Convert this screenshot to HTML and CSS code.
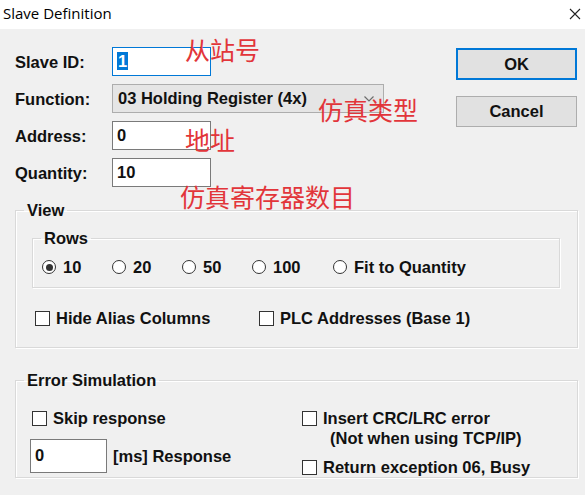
FILE: index.html
```html
<!DOCTYPE html>
<html>
<head>
<meta charset="utf-8">
<link rel="stylesheet" href="styles.css">
</head>
<body>
<div class="window">
  <div class="titlebar">
    <span class="title">Slave Definition</span>
    <svg class="close" width="12" height="12" viewBox="0 0 12 12"><path d="M1 1 L11 11 M11 1 L1 11" stroke="#222" stroke-width="1.1" fill="none"/></svg>
  </div>
  <div class="content">
    <div class="top">
      <div class="fields">
        <label class="lbl">Slave ID:</label>
        <div class="input focused"><span class="sel">1</span></div>
        <label class="lbl">Function:</label>
        <div class="combo"><span>03 Holding Register (4x)</span>
          <svg class="chev" width="10" height="6" viewBox="0 0 10 6"><path d="M0.5 0.5 L5 5 L9.5 0.5" stroke="#6d6d6d" stroke-width="1.2" fill="none"/></svg>
        </div>
        <label class="lbl">Address:</label>
        <div class="input">0</div>
        <label class="lbl">Quantity:</label>
        <div class="input">10</div>
      </div>
      <div class="buttons">
        <div class="btn default">OK</div>
        <div class="btn">Cancel</div>
      </div>
      <span class="note n1">从站号</span>
      <span class="note n2">仿真类型</span>
      <span class="note n3">地址</span>
      <span class="note n4">仿真寄存器数目</span>
    </div>

    <fieldset class="group view">
      <legend>View</legend>
      <div class="view-body">
        <fieldset class="group rows">
          <legend>Rows</legend>
          <div class="radios">
            <span class="opt w70"><span class="radio checked"></span>10</span>
            <span class="opt w70"><span class="radio"></span>20</span>
            <span class="opt w70"><span class="radio"></span>50</span>
            <span class="opt w81"><span class="radio"></span>100</span>
            <span class="opt"><span class="radio"></span>Fit to Quantity</span>
          </div>
        </fieldset>
        <div class="checks">
          <span class="opt w224"><span class="box"></span>Hide Alias Columns</span>
          <span class="opt"><span class="box"></span>PLC Addresses (Base 1)</span>
        </div>
      </div>
    </fieldset>

    <fieldset class="group error">
      <legend>Error Simulation</legend>
      <div class="errgrid">
        <div class="col left">
          <span class="opt skip"><span class="box"></span>Skip response</span>
          <div class="resp"><div class="input small">0</div><span>[ms] Response</span></div>
        </div>
        <div class="col right">
          <span class="opt"><span class="box"></span>Insert CRC/LRC error</span>
          <span class="sub">(Not when using TCP/IP)</span>
          <span class="opt ret"><span class="box"></span>Return exception 06, Busy</span>
        </div>
      </div>
    </fieldset>
  </div>
</div>
</body>
</html>
```
FILE: styles.css
```css
* { box-sizing: border-box; }
html, body { margin: 0; padding: 0; }
body {
  width: 585px;
  height: 495px;
  overflow: hidden;
  background: #f0f0f0;
  font-family: "Liberation Sans", Arial, sans-serif;
  font-weight: bold;
  font-size: 16.5px;
  color: #111;
}
.titlebar {
  height: 29px;
  background: #fff;
  display: flex;
  align-items: center;
  justify-content: space-between;
  padding: 0 4px 4px 3px;
}
.title {
  font-family: "Open Sans", "Noto Sans", sans-serif;
  font-weight: normal;
  font-size: 15px;
  color: #000;
}
.close { margin-top: 2px; }
.content { padding-top: 18px; }
.top {
  position: relative;
  display: flex;
  padding: 0 8px 0 15px;
  height: 154px;
}
.fields {
  display: grid;
  grid-template-columns: 97px auto;
  grid-auto-rows: 29px;
  row-gap: 8px;
  align-items: center;
  align-content: start;
}
.lbl { line-height: 29px; padding-top: 2px; }
.input {
  width: 99px;
  height: 29px;
  background: #fff;
  border: 1px solid #7a7a7a;
  padding: 0 4px;
  line-height: 27px;
  font-weight: bold;
}
.input.focused { border-color: #0078d7; }
.sel { background: #0078d7; color: #fff; padding: 0 1px; }
.combo {
  width: 272px;
  height: 29px;
  background: #e5e5e5;
  border: 1px solid #adadad;
  display: flex;
  align-items: center;
  justify-content: space-between;
  padding: 0 9px 0 5px;
}
.buttons {
  margin-left: auto;
  padding-top: 1px;
  display: flex;
  flex-direction: column;
  gap: 16px;
}
.btn {
  width: 121px;
  height: 31px;
  background: #e1e1e1;
  border: 1px solid #adadad;
  display: flex;
  align-items: center;
  justify-content: center;
}
.btn.default { height: 32px; border: 2px solid #0078d7; }
.note {
  position: absolute;
  font-family: "Noto Sans CJK SC", sans-serif;
  font-weight: normal;
  font-size: 25px;
  line-height: 30px;
  color: #e2353a;
  white-space: nowrap;
}
.n1 { left: 185px; top: -13px; }
.n2 { left: 318px; top: 47px; }
.n3 { left: 185px; top: 77px; }
.n4 { left: 180px; top: 134px; }

.group {
  margin: 0;
  padding: 0;
  border: 1px solid #d9d9d9;
  box-shadow: inset 1px 1px 0 #fff, 1px 1px 0 #fff;
  min-width: 0;
}
.group legend {
  padding: 0 3px;
  margin-left: 8px;
  line-height: 18px;
}
.view {
  margin: 0 7px 0 15px;
  height: 147px;
}
.view-body { padding: 10px 17px 0 16px; }
.rows {
  margin: 0;
  height: 59px;
}
.radios {
  display: flex;
  align-items: center;
  height: 38px;
  padding: 2px 0 0 9px;
}
.opt {
  display: inline-flex;
  align-items: center;
  white-space: nowrap;
}
.w70 { width: 70px; }
.w81 { width: 81px; }
.w224 { width: 224px; }
.radio {
  width: 14px;
  height: 14px;
  border: 1px solid #333;
  border-radius: 50%;
  background: #fff;
  margin-right: 7px;
  display: inline-flex;
  align-items: center;
  justify-content: center;
}
.radio.checked::after {
  content: "";
  width: 7px;
  height: 7px;
  border-radius: 50%;
  background: #333;
}
.checks {
  display: flex;
  align-items: center;
  padding: 21px 0 0 3px;
}
.box {
  width: 15px;
  height: 15px;
  border: 1px solid #333;
  background: #fff;
  margin-right: 6px;
}
.error {
  margin: 23px 7px 0 15px;
  height: 107px;
}
.errgrid {
  display: grid;
  grid-template-columns: 272px 1fr;
  padding: 15px 0 0 14px;
}
.col { display: flex; flex-direction: column; }
.skip { margin-left: 2px; margin-top: 3px; height: 22px; }
.resp {
  display: flex;
  align-items: center;
  gap: 6px;
  margin-top: 10px;
}
.input.small { width: 77px; height: 34px; line-height: 30px; }
.right .opt { height: 22px; margin-top: 3px; }
.sub { padding-left: 28px; line-height: 18px; font-weight: bold; }
.right .ret { margin-top: 9px; }
```
